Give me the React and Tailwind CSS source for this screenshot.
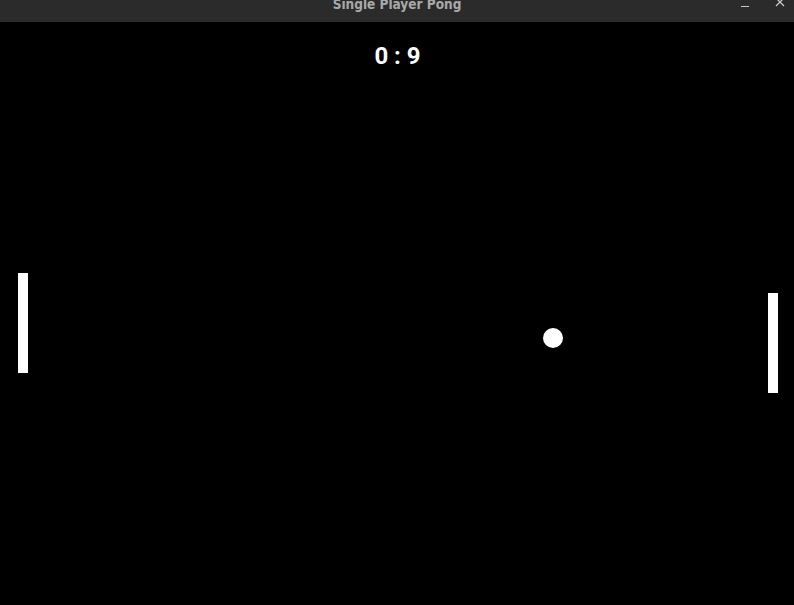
import React from "react";

// Single-player pong window: title bar + black canvas with paddles, ball, score.

const TitleBar = () => (
  <div className="relative h-[22px] bg-[#2b2b2b] overflow-hidden flex justify-center">
    <span
      className="text-[13.5px] leading-none font-bold text-[#a9a9a9] -mt-[2px]"
      style={{ fontFamily: '"DejaVu Sans Condensed", "DejaVu Sans", sans-serif' }}
    >
      Single Player Pong
    </span>
    <div className="absolute right-0 top-0 flex items-start">
      <span className="block w-[8px] h-[1px] bg-[#c8c8c8] mt-[6px] mr-[26px]" />
      <svg width="10" height="10" viewBox="0 0 10 10" className="-mt-[3px] mr-[9px]">
        <path d="M1 1 L9 9 M9 1 L1 9" stroke="#c8c8c8" strokeWidth="1.3" />
      </svg>
    </div>
  </div>
);

const Court = () => (
  <div className="relative flex-1 bg-black overflow-hidden">
    <div
      className="pt-[22px] pl-[1px] text-center text-white font-bold text-[24px] leading-none"
      style={{ fontFamily: "Roboto, sans-serif" }}
    >
      0 : 9
    </div>
    {/* game objects sit at canvas coordinates */}
    <div className="absolute left-[18px] top-[251px] w-[10px] h-[100px] bg-white" />
    <div className="absolute left-[768px] top-[271px] w-[10px] h-[100px] bg-white" />
    <div className="absolute left-[543px] top-[306px] w-[20px] h-[20px] rounded-full bg-white" />
  </div>
);

export default function App() {
  return (
    <div className="w-[794px] h-[605px] flex flex-col bg-black">
      <TitleBar />
      <Court />
    </div>
  );
}
